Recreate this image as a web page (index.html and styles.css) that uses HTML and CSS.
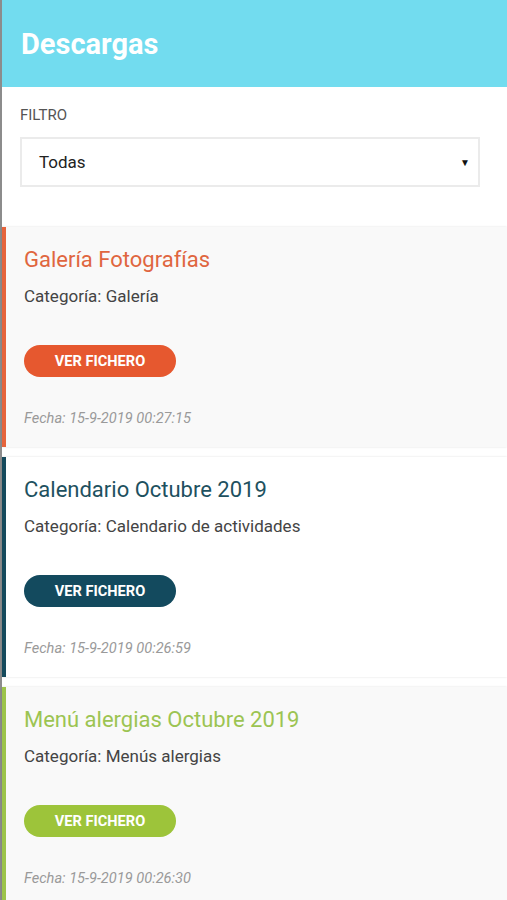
FILE: index.html
```html
<!DOCTYPE html>
<html lang="es">
<head>
<meta charset="utf-8">
<title>Descargas</title>
<link rel="stylesheet" href="styles.css">
</head>
<body>
<div class="page">
  <header class="header">
    <h1 class="header-title">Descargas</h1>
  </header>
  <section class="filter">
    <div class="filter-label">FILTRO</div>
    <div class="select">
      <span class="select-value">Todas</span>
      <span class="select-arrow">&#9660;</span>
    </div>
  </section>
  <div class="list">
    <article class="card card-orange">
      <h2 class="card-title">Galería Fotografías</h2>
      <p class="card-cat">Categoría: Galería</p>
      <a class="card-btn">VER FICHERO</a>
      <p class="card-date">Fecha: 15-9-2019 00:27:15</p>
    </article>
    <article class="card card-teal">
      <h2 class="card-title">Calendario Octubre 2019</h2>
      <p class="card-cat">Categoría: Calendario de actividades</p>
      <a class="card-btn">VER FICHERO</a>
      <p class="card-date">Fecha: 15-9-2019 00:26:59</p>
    </article>
    <article class="card card-green">
      <h2 class="card-title">Menú alergias Octubre 2019</h2>
      <p class="card-cat">Categoría: Menús alergias</p>
      <a class="card-btn">VER FICHERO</a>
      <p class="card-date">Fecha: 15-9-2019 00:26:30</p>
    </article>
  </div>
</div>
</body>
</html>
```

FILE: styles.css
```css
* { box-sizing: border-box; }
html, body { margin: 0; padding: 0; background: #fff; }
body { font-family: Roboto, "Noto Sans", Arial, sans-serif; }

.page {
  border-left: 2px solid #8c8c8c;
  min-height: 900px;
}

.header {
  height: 87px;
  background: #72dcef;
  display: flex;
  align-items: center;
  padding-left: 19px;
}
.header-title {
  margin: 0;
  color: #fff;
  font-size: 29px;
  font-weight: 700;
  line-height: 32px;
}

.filter {
  padding: 19px 27px 40px 18px;
}
.filter-label {
  font-size: 15px;
  line-height: 18px;
  color: #555;
  margin-bottom: 13px;
}
.select {
  height: 50px;
  border: 2px solid #ebebeb;
  display: flex;
  align-items: center;
  justify-content: space-between;
  padding: 0 8px 0 17px;
}
.select-value {
  font-size: 17px;
  color: #222;
}
.select-arrow {
  font-size: 10px;
  color: #111;
}

.card {
  height: 220px;
  padding: 19px 18px 20px 18px;
  border-left: 4px solid;
  background: #f9f9f9;
  box-shadow: 0 0 2px rgba(0,0,0,0.12);
  margin-bottom: 10px;
  display: flex;
  flex-direction: column;
  align-items: flex-start;
}
.card-teal { background: #fff; }

.card-title {
  margin: 0;
  font-size: 22px;
  font-weight: 400;
  line-height: 28px;
}
.card-cat {
  margin: 12px 0 0;
  font-size: 17px;
  line-height: 20px;
  color: #444;
}
.card-btn {
  margin-top: 39px;
  width: 152px;
  height: 33px;
  border-radius: 17px;
  color: #fff;
  font-size: 14.6px;
  font-weight: 700;
  display: flex;
  align-items: center;
  justify-content: center;
}
.card-date {
  margin: 32px 0 0;
  font-size: 14.6px;
  line-height: 18px;
  font-style: italic;
  color: #9a9a9a;
}

.card-orange { border-left-color: #e6643c; }
.card-orange .card-title { color: #e0663f; }
.card-orange .card-btn { background: #e6582f; }

.card-teal { border-left-color: #154a5c; }
.card-teal .card-title { color: #1e5160; }
.card-teal .card-btn { background: #134a5e; }

.card-green { border-left-color: #9cc44a; }
.card-green .card-title { color: #9cc452; }
.card-green .card-btn { background: #9dc43a; }
```
